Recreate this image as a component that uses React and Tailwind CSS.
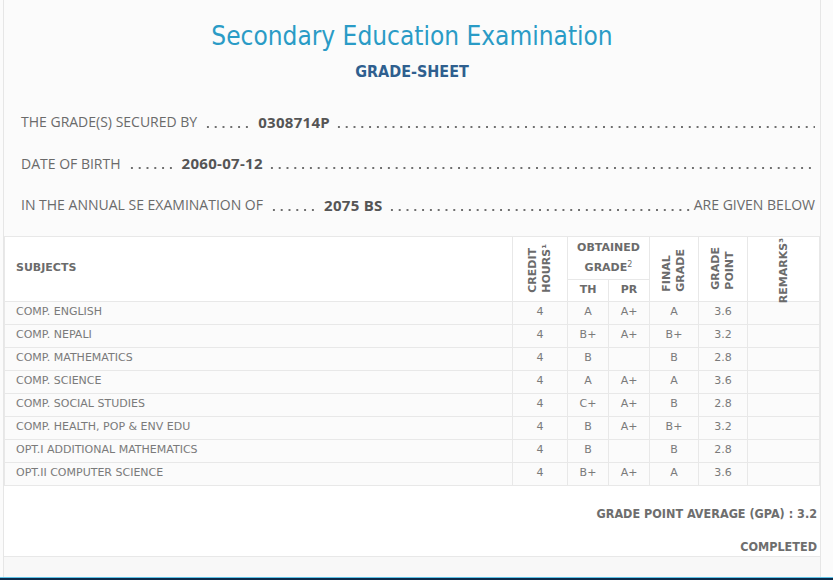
import React from "react";

const rows = [
  { name: "COMP. ENGLISH", ch: "4", th: "A", pr: "A+", fg: "A", gp: "3.6" },
  { name: "COMP. NEPALI", ch: "4", th: "B+", pr: "A+", fg: "B+", gp: "3.2" },
  { name: "COMP. MATHEMATICS", ch: "4", th: "B", pr: "", fg: "B", gp: "2.8" },
  { name: "COMP. SCIENCE", ch: "4", th: "A", pr: "A+", fg: "A", gp: "3.6" },
  { name: "COMP. SOCIAL STUDIES", ch: "4", th: "C+", pr: "A+", fg: "B", gp: "2.8" },
  { name: "COMP. HEALTH, POP & ENV EDU", ch: "4", th: "B", pr: "A+", fg: "B+", gp: "3.2" },
  { name: "OPT.I ADDITIONAL MATHEMATICS", ch: "4", th: "B", pr: "", fg: "B", gp: "2.8" },
  { name: "OPT.II COMPUTER SCIENCE", ch: "4", th: "B+", pr: "A+", fg: "A", gp: "3.6" },
];

// dotted leader drawn as a repeating background
const dots =
  "h-[14px] self-center bg-[radial-gradient(circle,#6f6f6f_1px,transparent_1.5px)] bg-[size:7.8px_4px] bg-repeat-x bg-[position:1px_100%]";

function InfoLine({ label, value, tail }) {
  return (
    <div className="flex h-[41.5px] items-center whitespace-nowrap">
      <span>{label}</span>
      <span className={`${dots} ml-[6px] mr-[5px] w-[50px]`} />
      <b className="text-[15px] font-bold tracking-[0.3px] text-[#555]">{value}</b>
      <span className={`${dots} ml-[4px] flex-1`} />
      {tail && <span className="pl-[2px]">{tail}</span>}
    </div>
  );
}

const cell = "border border-[#e8e8e8] text-center";
const vert = "[writing-mode:vertical-rl] rotate-180 leading-[14px] text-left";

export default function App() {
  return (
    <div className="h-[580px] overflow-hidden bg-[#fbfbfb] font-['DejaVu_Sans',sans-serif]">
      <div className="ml-[3px] w-[818px] border-x border-[#e6e6e6] bg-[#fbfbfb]">
        <div className="pt-[18px] text-center font-['DejaVu_Sans_Condensed',sans-serif]">
          <h1 className="text-[26px] leading-[36px] text-[#2a9bc6]">Secondary Education Examination</h1>
          <h2 className="mt-[8px] text-[16px] font-bold leading-[20px] text-[#2f5f8f]">GRADE-SHEET</h2>
        </div>

        <div className="mt-[19px] pl-[17px] pr-[5px] font-['Open_Sans',sans-serif] text-[14px] text-[#6a6a6a]">
          <InfoLine label="THE GRADE(S) SECURED BY" value="0308714P" />
          <InfoLine label="DATE OF BIRTH" value="2060-07-12" />
          <InfoLine label="IN THE ANNUAL SE EXAMINATION OF" value="2075 BS" tail="ARE GIVEN BELOW" />
        </div>

        <table className="mt-[10px] w-full table-fixed border-collapse text-[11px] text-[#7a7a7a]">
          <colgroup>
            <col />
            <col className="w-[55px]" />
            <col className="w-[41px]" />
            <col className="w-[41px]" />
            <col className="w-[49px]" />
            <col className="w-[49px]" />
            <col className="w-[72px]" />
          </colgroup>
          <thead className="bg-white text-[11px] font-bold text-[#6b6b6b]">
            <tr className="h-[43px]">
              <th rowSpan={2} className="border border-[#e8e8e8] pl-[11px] text-left">SUBJECTS</th>
              <th rowSpan={2} className={cell}>
                <div className="flex h-[64px] items-end justify-center pb-[8px]">
                  <span className={vert}>
                    CREDIT
                    <br />
                    HOURS¹
                  </span>
                </div>
              </th>
              <th colSpan={2} className={`${cell} leading-[20px]`}>
                OBTAINED
                <br />
                GRADE<sup className="text-[8px] font-normal">2</sup>
              </th>
              <th rowSpan={2} className={cell}>
                <div className="flex h-[64px] items-start justify-center pt-[12px]">
                  <span className={vert}>
                    FINAL
                    <br />
                    GRADE
                  </span>
                </div>
              </th>
              <th rowSpan={2} className={cell}>
                <div className="flex h-[64px] items-start justify-center pt-[10px]">
                  <span className={vert}>
                    GRADE
                    <br />
                    POINT
                  </span>
                </div>
              </th>
              <th rowSpan={2} className={cell}>
                <div className="flex h-[64px] items-start justify-center pt-[1px]">
                  <span className={vert}>REMARKS³</span>
                </div>
              </th>
            </tr>
            <tr className="h-[22px]">
              <th className={cell}>TH</th>
              <th className={cell}>PR</th>
            </tr>
          </thead>
          <tbody>
            {rows.map((r) => (
              <tr key={r.name} className="h-[23px] bg-[#fbfbfb]">
                <td className="border border-[#e8e8e8] pl-[11px]">{r.name}</td>
                <td className={cell}>{r.ch}</td>
                <td className={cell}>{r.th}</td>
                <td className={cell}>{r.pr}</td>
                <td className={cell}>{r.fg}</td>
                <td className={cell}>{r.gp}</td>
                <td className={cell}></td>
              </tr>
            ))}
          </tbody>
        </table>

        <div className="h-[70px] bg-white pr-[3px] text-right font-['DejaVu_Sans_Condensed',sans-serif] text-[12.5px] font-bold text-[#6e6e6e]">
          <div className="pt-[19px] leading-[18px]">GRADE POINT AVERAGE (GPA) : 3.2</div>
          <div className="pt-[15px] leading-[18px]">COMPLETED</div>
        </div>
        <div className="h-[21px] border-t border-[#e8e8e8] bg-[#f8f8f8]" />
      </div>
      <div className="h-[4px] border-t border-[#5fc2e6] bg-[#0c2a4a]" />
    </div>
  );
}
